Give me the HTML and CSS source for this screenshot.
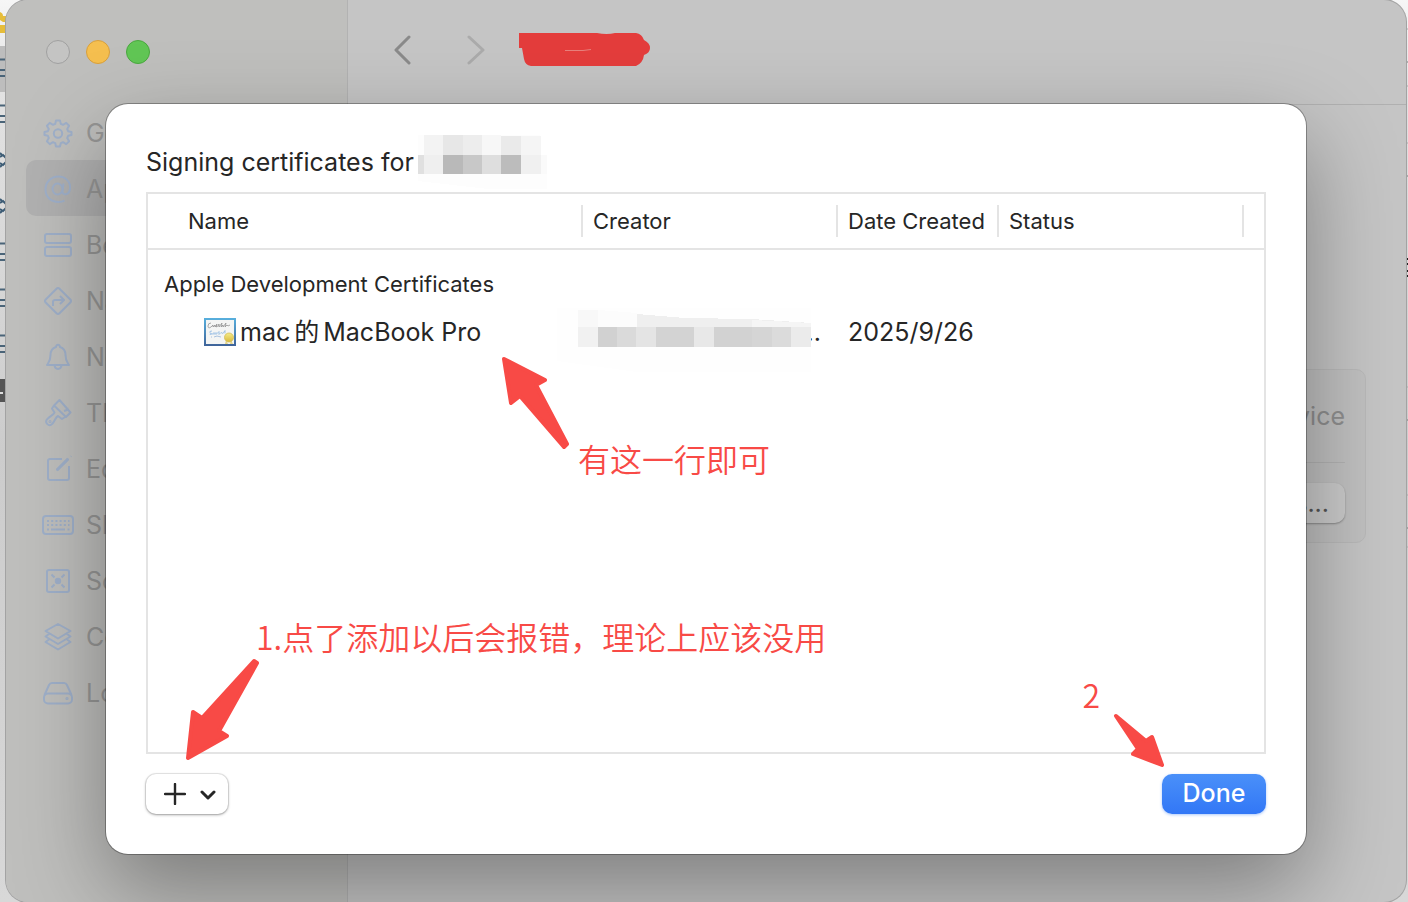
FILE: index.html
```html
<!DOCTYPE html>
<html lang="zh-CN">
<head>
  <meta charset="UTF-8" />
  <meta name="viewport" content="width=device-width, initial-scale=1.0"/>
  <title>Signing certificates</title>
  <link rel="stylesheet" href="styles.css">
</head>
<body>

<!-- slivers of the windows behind -->
<svg class="behind behind-left" width="6" height="902" viewBox="0 0 6 902" aria-hidden="true">
  <rect y="46" width="6" height="46" fill="#bdbdbd"/>
  <path d="M0 12q3 1 3 4h3v6H3l-3-2zM0 25h6v8H0z" fill="#e6bd3a"/>
  <path d="M0 59.500h6M0 70h6M0 76h6M0 105.500h6M0 116h6M0 122h6M0 243.500h6M0 254h6M0 260h6M0 289.500h6M0 300h6M0 306h6M0 335.500h6M0 346h6M0 352h6" stroke="#4a6478" stroke-width="2"/>
  <path d="M0 153l2 2M0 167l2-2M0 199l2 2M0 213l2-2" stroke="#3d5c75" stroke-width="2"/>
  <path d="M0 157l3-2 3 3v4l-3 3-3-2M0 203l3-2 3 3v4l-3 3-3-2" fill="none" stroke="#3d5c75" stroke-width="2"/>
  <path d="M0 379h6v23H0z" fill="#555"/>
  <path d="M0 393h3" stroke="#ddd" stroke-width="2"/>
</svg>
<svg class="behind behind-right" width="2" height="902" viewBox="0 0 2 902" aria-hidden="true">
  <path d="M0 62h2M0 176h2M0 420h2M0 528h2" stroke="#777"/>
  <path d="M0 29h2M0 86h2M0 143h2M0 387h2M0 495h2M0 547h2" stroke="#aaa"/>
  <path d="M0 259h2M0 264h2M0 271h2M0 276h2" stroke="#222" stroke-width="2"/>
</svg>

<div class="window">
  <aside class="sidebar">
    <div class="lights">
      <button class="light" aria-label="Close"></button>
      <button class="light yellow" aria-label="Minimize"></button>
      <button class="light green" aria-label="Zoom"></button>
    </div>
    <nav>
      <a href="#">
        <svg width="32" height="32" viewBox="0 0 32 32"><path d="M14 3.500h4l.8 3.400 2.200.9 3.200-1.900 2.900 2.900-1.900 3.200.9 2.200 3.400.8v3l-3.400.8-.9 2.200 1.900 3.200-2.900 2.900-3.200-1.900-2.200.9-.8 3.300h-4l-.8-3.300-2.200-.9-3.200 1.900-2.900-2.900 1.900-3.200-.9-2.200-3.400-.8v-3l3.400-.8.9-2.200-1.900-3.200 2.900-2.900L11 7.800l2.200-.9z"/><circle cx="16" cy="16.500" r="4.200"/></svg>
        General
      </a>
      <a href="#" class="selected">
        <svg width="32" height="32" viewBox="0 0 32 32"><ellipse cx="15.500" cy="16" rx="5" ry="5.500"/><path d="M21.500 10.500l-1 8c-.3 4 6.500 4.200 7.500-2.500C29 9 23.500 3.500 16.500 3.500 9 3.500 3.500 9 3.500 16.500S9 29 16.500 29c2.500 0 4.500-.5 6-1.300"/></svg>
        Apple Accounts
      </a>
      <a href="#">
        <svg width="32" height="32" viewBox="0 0 32 32"><rect x="3" y="5" width="26" height="9" rx="2"/><rect x="3" y="18" width="26" height="9" rx="2"/></svg>
        Behaviors
      </a>
      <a href="#">
        <svg width="32" height="32" viewBox="0 0 32 32"><path d="M14.500 3.700q1.500-1.500 3 0l10.800 10.800q1.500 1.500 0 3L17.500 28.300q-1.500 1.500-3 0L3.700 17.500q-1.500-1.500 0-3z"/><path d="M11 21v-4q0-2 2-2h8M18 11l4 4-4 4"/></svg>
        Nav
      </a>
      <a href="#">
        <svg width="32" height="32" viewBox="0 0 32 32"><path d="M5 24c2-3 3.500-4 3.500-10 0-5 2.500-7 5.500-8 .5-3 3.500-3 4 0 3 1 5.500 3 5.500 8 0 6 1.500 7 3.500 10zM12.500 24.500c.5 4.500 6.500 4.500 7 0"/></svg>
        Notifications
      </a>
      <a href="#">
        <svg width="32" height="32" viewBox="0 0 32 32"><path d="M17.500 3l11 12.500-4.500 4.500L12 8.500zM12 8.500l-2 3 2.500 4c-1 3-6 4-8 7.500-1.500 3 2 6.500 5 4.500 3-2 3.500-7 6.500-8.500l4 3 4-2.500M22 14l3-1 .5-2.500"/><circle cx="8" cy="24.500" r=".5"/></svg>
        Themes
      </a>
      <a href="#">
        <svg width="32" height="32" viewBox="0 0 32 32"><path d="M20 6H8Q6 6 6 8v17q0 2 2 2h17q2 0 2-2V13M14.500 17.500L26.500 5.500M28.800 3.500l.4-.4" /><path d="M15 17L26 6" stroke-width="3"/></svg>
        Editing
      </a>
      <a href="#">
        <svg width="32" height="32" viewBox="0 0 32 32"><rect x="1" y="7" width="30" height="18" rx="3"/><path d="M5 12h20.500M5 16h20.500" stroke-dasharray="2 2.200"/><path d="M26 12h1.500M26 16h1.500M5 20.500h2M9 20.500h14M25.500 20.500h2"/></svg>
        Shortcuts
      </a>
      <a href="#">
        <svg width="32" height="32" viewBox="0 0 32 32"><rect x="5" y="5" width="22" height="22" rx="2"/><circle cx="16" cy="16" r="2.200" class="solid"/><path d="M9.500 9.500l3 3M22.500 9.500l-3 3M9.500 22.500l3-3M22.500 22.500l-3-3"/></svg>
        Source Control
      </a>
      <a href="#">
        <svg width="32" height="32" viewBox="0 0 32 32"><path d="M16 3l12.500 7L16 17.500 3.500 10zM7 13l-3.500 2.500L16 23l12.500-7.500L25 13M7 18.500l-3.500 2.500L16 28.500 28.500 21 25 18.500"/></svg>
        Components
      </a>
      <a href="#">
        <svg width="32" height="32" viewBox="0 0 32 32"><path d="M2.500 18L7 8q1-2 3-2h12q2 0 3 2l4.500 10"/><rect x="2" y="16.500" width="28" height="10" rx="4"/><circle cx="25" cy="21.500" r=".6"/></svg>
        Locations
      </a>
    </nav>
  </aside>

  <main class="content">
    <header class="toolbar">
      <button class="nav-btn" aria-label="Back">
        <svg width="20" height="30" viewBox="0 0 20 30"><path d="M15 2L2 15l13 13" stroke="#8a8a8a"/></svg>
      </button>
      <button class="nav-btn" aria-label="Forward" disabled>
        <svg width="20" height="30" viewBox="0 0 20 30"><path d="M3 2l14 13L3 28" stroke="#ababab"/></svg>
      </button>
      <svg width="132" height="34" viewBox="0 0 132 34" aria-hidden="true">
        <path d="M0 0h78q10 2 18 0h21q6 1 8 7 6 3 6 8t-6 7q-1 8-8 11H12q-6-1-7-7L3 15H0z" fill="#e43d3c"/>
        <path d="M46 17.500h18l8-1" stroke="#e8807c" fill="none"/>
      </svg>
    </header>
    <section class="card">
      <div class="card-row">Terms of Service</div>
      <div class="card-row"><button class="plain-btn">Manage Certificates...</button></div>
    </section>
  </main>

  <div class="sheet" role="dialog" aria-labelledby="sheet-title">
    <h1 id="sheet-title">Signing certificates for
      <svg class="mosaic-title" width="130" height="54" viewBox="0 0 130 54" shape-rendering="crispEdges" aria-hidden="true">
        <path d="M0 0h122v20h7v34H70L0 46z" fill="#fdfdfd"/>
        <path d="M6 0h19v20H6z" fill="#f3f3f3"/><path d="M25 0h20v20H25z" fill="#e7e7e7"/>
        <path d="M45 0h19v20H45z" fill="#ededed"/><path d="M64 0h19v20H64z" fill="#f7f7f7"/>
        <path d="M83 1h20v19H83z" fill="#eaeaea"/><path d="M103 1h20v19h-20z" fill="#f5f5f5"/>
        <path d="M0 20h6v19H0z" fill="#e0e0e0"/><path d="M6 20h19v19H6z" fill="#efefef"/>
        <path d="M25 20h20v19H25z" fill="#b9b9b9"/><path d="M45 20h19v19H45z" fill="#c8c8c8"/>
        <path d="M64 20h19v19H64z" fill="#dedede"/><path d="M83 20h20v19H83z" fill="#bcbcbc"/>
        <path d="M103 20h20v19h-20z" fill="#f0f0f0"/><path d="M123 20h6v19h-6z" fill="#fafafa"/>
      </svg>
    </h1>

    <div class="table-box">
      <table>
        <colgroup>
          <col class="col-name"><col class="col-creator"><col class="col-date"><col><col class="col-end">
        </colgroup>
        <thead>
          <tr>
            <th><span class="first">Name</span></th>
            <th><span>Creator</span></th>
            <th><span>Date Created</span></th>
            <th><span>Status</span></th>
            <td></td>
          </tr>
        </thead>
        <tbody>
          <tr class="group">
            <th colspan="5">Apple Development Certificates</th>
          </tr>
          <tr class="cert">
            <td>
              <div class="cert-name">
                <svg width="32" height="28" viewBox="0 0 32 28" aria-hidden="true">
                  <defs>
                    <linearGradient id="frame" x2="0" y2="1"><stop stop-color="#58b0de"/><stop offset="1" stop-color="#3f6399"/></linearGradient>
                    <linearGradient id="seal" x2="0" y2="1"><stop stop-color="#f5ec8a"/><stop offset="1" stop-color="#d9b93c"/></linearGradient>
                  </defs>
                  <rect width="32" height="28" fill="url(#frame)"/>
                  <rect x="2" y="2" width="28" height="24" fill="#f4f5f4"/>
                  <path d="M7 5q-3 0-3 3t3 1l2-2v2l2-2v2l2-3-1 3 2-1 1-2v3l3-4-1 4 2-2v2l3-4-1 4 2-2 1 1 2-1" fill="none" stroke="#888" stroke-width=".7"/>
                  <path d="M8 13q-3 0-2 1.500t0 2l2-1v1l2-2v2l2-2v2l3-3v3l2-2 2 1 2-3v3" fill="none" stroke="#8fb8e2" stroke-width=".8"/>
                  <path d="M7 19h1M10 19l3-1 4 1" fill="none" stroke="#a9c2df"/>
                  <path d="M22 22l-1 4h3zM27 22l2 4h-3z" fill="#e3d48a"/>
                  <circle cx="25" cy="19.500" r="4.500" fill="url(#seal)" stroke="#d2bd58" stroke-width=".8"/>
                </svg>
                <div>mac<span class="han">的</span>MacBook Pro</div>
              </div>
            </td>
            <td class="creator">..
              <svg class="mosaic-creator" width="254" height="64" viewBox="0 0 254 64" shape-rendering="crispEdges" aria-hidden="true">
                <path d="M0 0h254v64H80L0 53z" fill="#fefefe"/>
                <path d="M21 2h20v17H21z" fill="#f8f8f8"/><path d="M41 2l39 3v14H41z" fill="#fcfcfc"/>
                <path d="M80 6l48 4 66 1 60 4v4H80z" fill="#efefef"/><path d="M195 12l59 3v4h-59z" fill="#f5f5f5"/>
                <path d="M21 19h20v20H21z" fill="#f1f1f1"/><path d="M41 19h19v20H41z" fill="#d1d1d1"/>
                <path d="M60 19h19v20H60z" fill="#dadada"/><path d="M79 19h20v20H79z" fill="#e4e4e4"/>
                <path d="M99 19h38v20H99z" fill="#d3d3d3"/><path d="M137 19h20v20h-20z" fill="#e8e8e8"/>
                <path d="M157 19h38v20h-38z" fill="#d2d2d2"/><path d="M195 19h20v20h-20z" fill="#d5d5d5"/>
                <path d="M215 19h19v20h-19z" fill="#dbdbdb"/><path d="M234 19h20v20h-20z" fill="#ebebeb"/>
              </svg>
            </td>
            <td class="date">2025/9/26</td>
            <td></td>
            <td></td>
          </tr>
        </tbody>
      </table>
    </div>

    <div class="actions">
      <button class="add-btn" aria-label="Add certificate">
        <svg width="22" height="22" viewBox="0 0 22 22"><path d="M11 1v20M1 11h20" stroke-width="2.400"/></svg>
        <svg width="16" height="12" viewBox="0 0 16 12"><path d="M2 4l6 6 6-6" stroke-width="3"/></svg>
      </button>
      <button class="done-btn">Done</button>
    </div>

    <!-- notes drawn over the sheet -->
    <p class="note note-row">有这一行即可</p>
    <svg class="arrow arrow-row" width="68" height="94" viewBox="0 0 68 94" aria-hidden="true">
      <path d="M3 3l41 21-9 5 31 59-3 3L19 40l-9 7z"/>
    </svg>
    <p class="note note-add">1.点了添加以后会报错，理论上应该没用</p>
    <svg class="arrow arrow-add" width="74" height="104" viewBox="0 0 74 104" aria-hidden="true">
      <path d="M69 3l3 2-38 68 8 5L3 100l5-46 9 6z"/>
    </svg>
    <p class="note note-done">2</p>
    <svg class="arrow arrow-done" width="52" height="56" viewBox="0 0 52 56" aria-hidden="true">
      <path d="M3 3l30 25 6-4 10 28-29-11 5-5z"/>
    </svg>
  </div>
</div>

</body>
</html>
```

FILE: styles.css
```css
* {
  box-sizing: border-box;
}
body {
  font-family: Inter, 'Noto Sans CJK SC', sans-serif;
  font-size: 25px;
  line-height: 32px;
  color: #262626;
  margin: 0;
  padding: 0 2px 0 6px;
  height: 100vh;
  overflow: hidden;
  background: linear-gradient(#f6f6f6, #e2e2e2 10%, #cccccc 50%, #d8d8d8);
}
button {
  font: inherit;
  color: inherit;
  border: none;
  padding: 0;
  cursor: pointer;
}
svg {
  flex: none;
}
.behind {
  position: absolute;
  top: 0;
}
.behind-left {
  left: 0;
}
.behind-right {
  right: 0;
}
.window {
  position: relative;
  display: flex;
  height: 100%;
  border-radius: 22px;
  overflow: hidden;
  background: #c5c5c5;
  box-shadow: 0 0 0 1px #a3a3a3;
}

/* sidebar */
.sidebar {
  width: 342px;
  padding: 0 20px;
  background: #bfbfbd;
  border-right: 1px solid #b2b2b2;
}
.lights {
  display: flex;
  align-items: center;
  gap: 16px;
  height: 104px;
  padding-left: 20px;
}
.light {
  width: 24px;
  height: 24px;
  border: 1px solid #a0a0a0;
  border-radius: 50%;
  background: #c4c4c3;
}
.light.yellow {
  background: #f5bf4f;
  border-color: #d9a03c;
}
.light.green {
  background: #61c655;
  border-color: #4aa83f;
}
.sidebar nav a {
  display: flex;
  align-items: center;
  gap: 12px;
  height: 56px;
  padding: 2px 0 0 16px;
  border-radius: 10px;
  color: #979796;
  text-decoration: none;
  white-space: nowrap;
}
.sidebar nav a.selected {
  background: #b1b1b1;
}
.sidebar nav svg {
  fill: none;
  stroke: #9fb0ca;
  stroke-width: 2;
  stroke-linejoin: round;
}
.sidebar nav .solid {
  fill: #9fb0ca;
}

/* main area */
.content {
  flex: 1;
}
.toolbar {
  display: flex;
  align-items: center;
  height: 105px;
  padding: 0 46px 4px;
  border-bottom: 1px solid #b0b0b0;
}
.nav-btn {
  display: flex;
  margin-right: 52px;
  background: none;
}
.nav-btn:disabled {
  margin-right: 33px;
}
.nav-btn svg {
  fill: none;
  stroke-width: 3;
  stroke-linecap: round;
  stroke-linejoin: round;
}
.card {
  margin: 264px 40px 0;
  padding: 0 20px;
  border: 1px solid #b9b9b9;
  border-radius: 10px;
  background: #c1c1c1;
}
.card-row {
  display: flex;
  align-items: center;
  justify-content: flex-end;
  height: 92px;
  color: #8f8f8f;
}
.card-row + .card-row {
  height: 80px;
  border-top: 1px solid #b3b3b3;
}
.plain-btn {
  height: 40px;
  padding: 0 16px;
  border-radius: 10px;
  background: #cbcbcb;
  color: #555;
  box-shadow: 0 1px 2px rgba(0,0,0,0.3);
}

/* sheet */
.sheet {
  position: absolute;
  top: 104px;
  bottom: 48px;
  left: 100px;
  right: 100px;
  display: flex;
  flex-direction: column;
  padding: 40px;
  border-radius: 22px;
  background: #fff;
  box-shadow: 0 0 0 1px rgba(0,0,0,0.3), 0 36px 90px rgba(0,0,0,0.36);
}
h1 {
  position: relative;
  align-self: flex-start;
  margin: 0 0 14px;
  padding: 2px 4px 0 0;
  font-size: 25px;
  font-weight: 400;
}
.mosaic-title {
  position: absolute;
  left: 100%;
  top: -9px;
}
.table-box {
  flex: 1;
  border: 2px solid #e4e4e4;
}
table {
  width: 100%;
  table-layout: fixed;
  border-collapse: collapse;
}
.col-name {
  width: 435px;
}
.col-creator {
  width: 255px;
}
.col-date {
  width: 161px;
}
.col-end {
  width: 20px;
}
th, td {
  padding: 0;
  font-weight: 400;
  text-align: left;
  white-space: nowrap;
}
th {
  font-size: 22px;
}
thead tr {
  height: 55px;
  border-bottom: 2px solid #e4e4e4;
}
thead span {
  display: block;
  padding-left: 10px;
  border-right: 2px solid #e4e4e4;
}
thead .first {
  padding-left: 40px;
}
.group th {
  padding: 18px 16px 16px;
}
.cert-name {
  display: flex;
  align-items: center;
  gap: 4px;
  padding-left: 56px;
}
.han {
  margin: 0 4px;
}
.creator {
  position: relative;
  padding-right: 17px;
  text-align: right;
}
.mosaic-creator {
  position: absolute;
  right: 27px;
  top: -8px;
}
.date {
  padding-left: 10px;
}
.actions {
  display: flex;
  justify-content: space-between;
  margin-top: 20px;
}
.add-btn {
  display: flex;
  align-items: center;
  justify-content: center;
  gap: 14px;
  width: 82px;
  height: 40px;
  padding-left: 6px;
  border-radius: 10px;
  background: #fff;
  box-shadow: 0 0 0 1px rgba(0,0,0,0.08), 0 1px 3px rgba(0,0,0,0.35);
}
.add-btn svg {
  fill: none;
  stroke: #262626;
  stroke-linecap: round;
  stroke-linejoin: round;
}
.done-btn {
  width: 104px;
  height: 40px;
  padding-bottom: 2px;
  border-radius: 10px;
  background: linear-gradient(#4a90f9, #3277f6);
  color: #fff;
  font-weight: 500;
  box-shadow: 0 1px 3px rgba(50,119,246,0.4);
}

/* notes */
.note {
  position: absolute;
  margin: 0;
  font-family: 'Noto Sans CJK SC', sans-serif;
  font-size: 32px;
  font-weight: 350;
  line-height: 40px;
  color: #f84a46;
  white-space: nowrap;
}
.arrow {
  position: absolute;
  fill: #f84a46;
  stroke: #f84a46;
  stroke-width: 4;
  stroke-linejoin: round;
}
.note-row {
  left: 472px;
  top: 334px;
}
.arrow-row {
  left: 395px;
  top: 252px;
}
.note-add {
  left: 150px;
  bottom: 198px;
}
.arrow-add {
  left: 79px;
  bottom: 92px;
}
.note-done {
  right: 206px;
  bottom: 140px;
}
.arrow-done {
  right: 141px;
  bottom: 85px;
}
```
